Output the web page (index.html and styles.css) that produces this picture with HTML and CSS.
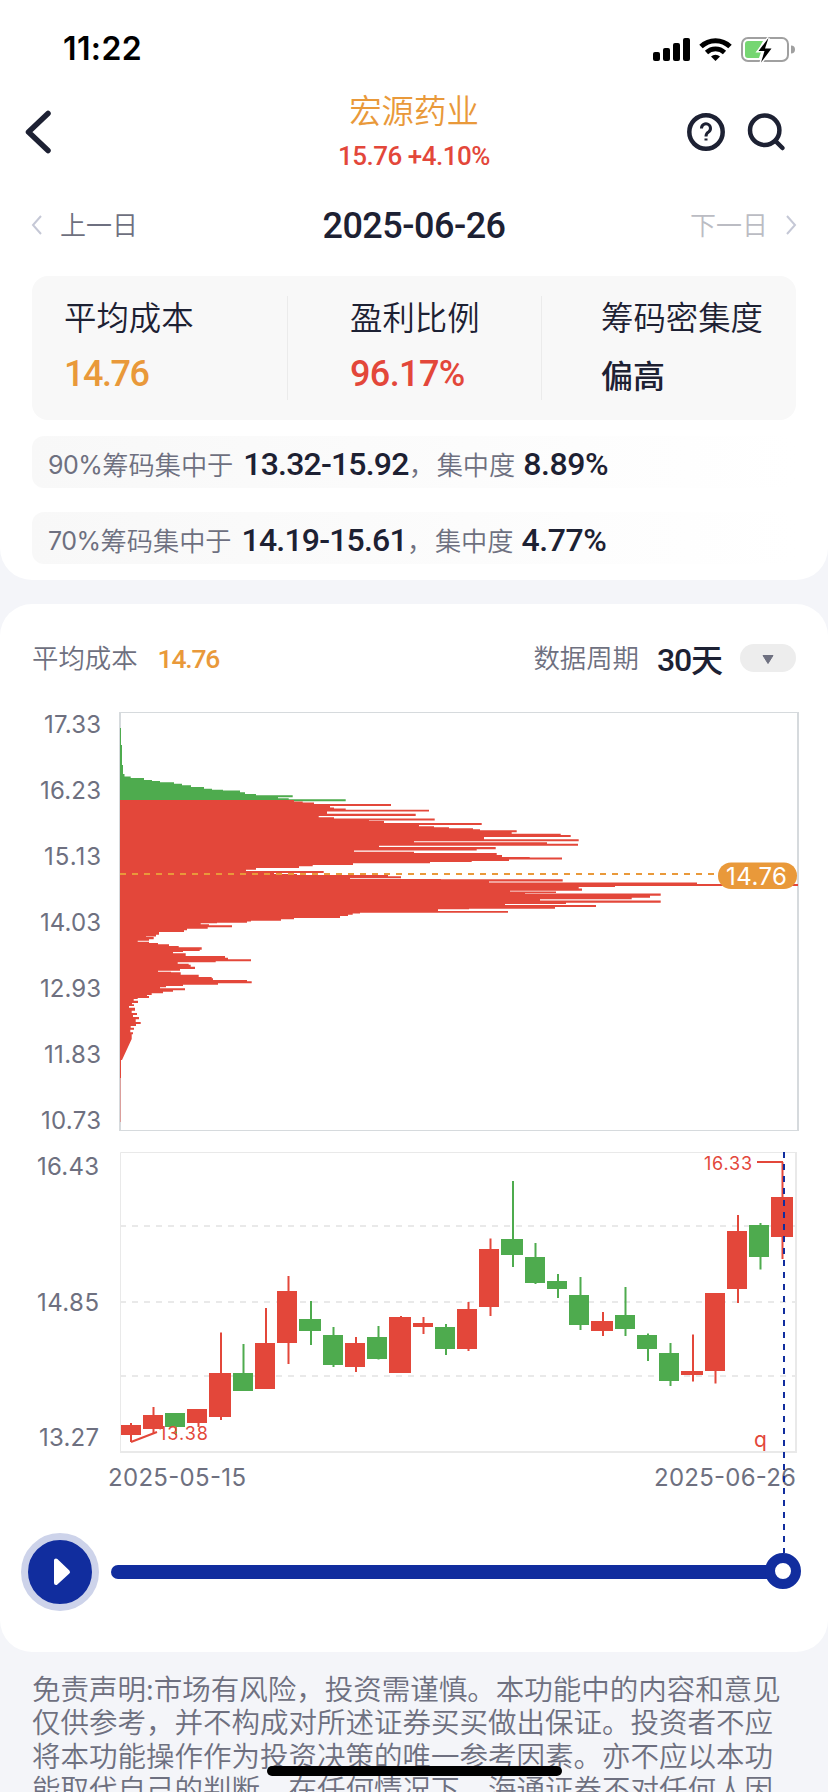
FILE: index.html
```
<!DOCTYPE html>
<html lang="zh-CN">
<head>
	<meta charset="utf-8">
	<title>筹码分布</title>
	<link rel="stylesheet" href="styles.css">
</head>
<body>
<div class="page">

	<div class="card top">
		<div class="status">
			<span class="time">11:22</span>
			<svg width="144" height="28" viewBox="652 36 144 28">
				<rect x="653" y="52" width="7" height="9" rx="2"/>
				<rect x="663" y="48" width="7" height="13" rx="2"/>
				<rect x="673" y="43" width="7" height="18" rx="2"/>
				<rect x="683" y="38" width="7" height="23" rx="2"/>
				<path d="M701 46.5a21 21 0 0 1 29 0" fill="none" stroke="#000" stroke-width="5"/>
				<path d="M706.5 52.5a13 13 0 0 1 18 0" fill="none" stroke="#000" stroke-width="4.6"/>
				<path d="M711 56.5a6.5 6.5 0 0 1 9 0l-4.500 4.500z"/>
				<rect x="742" y="38" width="46" height="23" rx="6" fill="none" stroke="#a0a0a0" stroke-width="2"/>
				<path d="M791 45.500a4 4 0 0 1 0 8z" fill="#a0a0a0"/>
				<path d="M748 41h15l-6 11h4l-2 6h-11a3 3 0 0 1-3-3v-11a3 3 0 0 1 3-3z" fill="#76d672"/>
				<path d="M768.500 38l-10 13h6l-3.500 11.500 10.500-14h-6.500z" stroke="#fff" stroke-width="3" paint-order="stroke"/>
			</svg>
		</div>

		<div class="nav">
			<svg class="back" width="30" height="46" viewBox="24 109 30 46"><path d="M48 113.500L28.500 132 48 150.500"/></svg>
			<div class="stock">
				<div class="name">宏源药业</div>
				<div class="price">15.76 +4.10%</div>
			</div>
			<svg class="tools" width="100" height="42" viewBox="686 111 100 42">
				<circle cx="706" cy="132" r="16.700"/>
				<path class="thin" d="M701.500 128.500a4.500 4.500 0 1 1 7 3.500q-2.500 1.500-2.500 4.500M706 138.500v2"/>
				<circle cx="764.700" cy="130.300" r="14.700"/>
				<path d="M775.500 141l7 7"/>
			</svg>
		</div>

		<div class="days">
			<div class="day prev"><svg width="12" height="22"><path d="M10 2L2 11l8 9"/></svg>上一日</div>
			<div class="date">2025-06-26</div>
			<div class="day next">下一日<svg width="12" height="22"><path d="M2 2l8 9-8 9"/></svg></div>
		</div>

		<div class="stats">
			<div class="stat"><div class="label">平均成本</div><div class="value orange">14.76</div></div>
			<div class="stat"><div class="label">盈利比例</div><div class="value red">96.17%</div></div>
			<div class="stat"><div class="label">筹码密集度</div><div class="value cn">偏高</div></div>
		</div>

		<div class="range"><i>90%</i><span>筹码集中于</span><b>13.32-15.92</b><span class="sep">，</span><span>集中度</span><b class="last">8.89%</b></div>
		<div class="range"><i>70%</i><span>筹码集中于</span><b>14.19-15.61</b><span class="sep">，</span><span>集中度</span><b class="last">4.77%</b></div>
	</div>

	<div class="card main">
		<div class="bar">
			<span class="cn">平均成本</span><span class="avg">14.76</span>
			<span class="cn period">数据周期</span><span class="num">30</span><span class="tian">天</span>
			<span class="drop"><svg width="14" height="12"><path d="M2 1.500h10L7 9.500z"/></svg></span>
		</div>

		<!-- chip distribution -->
		<svg class="chart" width="828" height="444" viewBox="0 700 828 444">
			<path class="frame" d="M121 712.500H797.500V1130.500H120.500"/>
			<path d="M798 712V1131M120 712V1131" stroke="#d6dadd" stroke-width="2"/>
			<path class="green" d="M120 728H121V745H122V765H123V774H124.500V776.500H130.700V778H144V780H152V781H160V782.300H174V783.700H182V785.300H191V787H204V788.700H212V789.700H223V790.400H240V792.300H245V794H256V795.300H292.700V797.300H278V798.300H288.700V799.300H345.700V801.300H120z"/>
			<path class="red" d="M120 800H294V801.500H302.700V802.500H314V804H391V806H330V807.500H334V808.500H345.700V809.700H429V811.500H327V813.800H415.700V816H318.700V817.300H334V818.500H434.700V820.400H369V821H384V823H481.700V825H419V826.300H434V827.300H449V828.300H473V829.300H480V830.300H516.700V832.300H511.700V833.700H560.700V835H570.700V837H484V839.300H578.700V841.300H414V842.300H547V843.700H578V845.700H379V847H495.700V849.300H476.700V850.500H354V851.700H414V853H496.700V855H502V857H529.700V857.600H562V859.500H509V861H471.700V862H430V863.300H353V865H312.700V866.300H299V868H256V869.700H246V871H323.700V873H274V874H297V875H388V876.300H401V878.200H350V879H441V879.300H562.700V881.500H489V882.600H697V884H798V886H615V887H578.700V888.500H582V890.700H510V891.500H556V893H525V893.500H660.700V895.700H650V897.700H631.700V899.300H540V900.500H660.700V902.700H566V904H505V905H596V907H555V908.700H469V909.200H438V911H508V912.700H360V913.500H352.700V914.700H348V916H340V918H294V919.300H281V920.700H251V921.500H247V922.700H217V923.300H200.700V924.300H209V925.300H232V927.300H207.700V928.700H187V930.300H184V932H159V934.700H156V936.500H146V937H153.700V939.300H149V940.700H137.700V941.700H149V943H158V944.300H169V946H178.700V947.300H201.700V949.700H199.700V951H183V952H173V953.300H185.700V956H225V957.700H228V959.300H251V961.300H215.700V962.300H177.700V963.700H188.700V964.700H190.700V966.700H195V969H180V970.700H158V971.700H171V972.300H180.700V974.700H198.700V977H211.700V978.300H213V980H247V981.300H251.700V983.300H218V984.700H183V986H166V987.300H160V988.300H185V990.300H173V991.700H163V993.300H151.700V995H147V996H149V998H137.700V999H133.700V1000.700H138V1003H132V1004.300H134V1006H129V1007.700H135V1010.700H131.700V1013H137V1015H133V1017H139V1019.300H135.700V1022H140.700V1024H136V1026H130.700V1027.700H134V1029.700H130.300V1032.300H133V1034.300H131.700V1039L128 1047 122 1060H121V1122H120z"/>
			<path d="M120 1078V1130" stroke="#d6dadd" stroke-width="2" opacity=".6"/>
			<path d="M120 874H718" stroke="#e9993a" stroke-width="2" stroke-dasharray="6 6"/>
			<rect x="718" y="862.500" width="79" height="26.500" rx="13" fill="#e9993a"/>
			<text x="726" y="885" class="tip" textLength="61">14.76</text>
			<g class="axis">
				<text x="44" y="733" textLength="57">17.33</text>
				<text x="40" y="799" textLength="61">16.23</text>
				<text x="44" y="865" textLength="57">15.13</text>
				<text x="40" y="931" textLength="61">14.03</text>
				<text x="40" y="997" textLength="61">12.93</text>
				<text x="44" y="1063" textLength="57">11.83</text>
				<text x="41" y="1129" textLength="60">10.73</text>
			</g>
		</svg>

		<!-- daily candles -->
		<svg class="chart" width="828" height="409" viewBox="0 1144 828 409">
			<path class="grid" d="M120.500 1452V1152.500H796"/>
			<path class="grid bold" d="M796 1152V1452H120"/>
			<path class="grid bold" stroke-dasharray="6 6" d="M120 1226H796M120 1302H796M120 1376H796"/>
			<g class="axis">
				<text x="37" y="1175" textLength="62">16.43</text>
				<text x="37" y="1311" textLength="62">14.85</text>
				<text x="39" y="1446" textLength="60">13.27</text>
				<text x="108" y="1486" textLength="138">2025-05-15</text>
				<text x="654" y="1486" textLength="142">2025-06-26</text>
			</g>
			<path class="wick up" d="M131 1423V1442M153.500 1407V1433M198.500 1415V1427M221 1332.500V1420M266 1308V1380M288.500 1276V1364M356 1337V1372M401 1316V1330M423.500 1317V1334M468.500 1302V1351M490.500 1238.500V1316M603 1312V1336M693 1334.500V1381.500M715.500 1300V1383.500M738 1215V1303M782.500 1162V1259"/>
			<path class="wick down" d="M176 1418V1435M243.500 1344V1385M311 1301V1345M333.500 1327V1367M378.500 1326V1359.500M446 1324V1355M513 1181V1267M535.500 1243V1284M558 1274V1298M580.500 1277V1330M625.500 1287V1336M648 1333.500V1361M670.500 1343V1386M760.500 1223V1269.500"/>
			<path class="red" d="M121 1425h20v10h-20zM143 1415h20v14h-20zM187 1409h20v14h-20zM209 1373h22v44h-22zM255 1343h20v46h-20zM277 1291h20v52h-20zM345 1343h20v24h-20zM389 1317h22v56h-22zM413 1323h20v4h-20zM457 1309h20v40h-20zM479 1249h20v58h-20zM591 1321h22v10h-22zM681 1371h22v4h-22zM705 1293h20v78h-20zM727 1231h20v58h-20zM771 1197h22v40h-22z"/>
			<path class="green" d="M165 1413h20v14h-20zM233 1373h20v18h-20zM299 1319h22v12h-22zM323 1335h20v30h-20zM367 1337h20v22h-20zM435 1327h20v22h-20zM501 1239h22v16h-22zM525 1257h20v26h-20zM547 1281h20v8h-20zM569 1295h20v30h-20zM615 1315h20v14h-20zM637 1335h20v14h-20zM659 1353h20v28h-20zM749 1225h20v32h-20z"/>
			<path class="wick up" d="M131 1442L157 1432M757 1162H783"/>
			<g class="mark">
				<text x="159" y="1440" textLength="49">13.38</text>
				<text x="704" y="1170" textLength="48">16.33</text>
				<text x="754" y="1447" class="q">q</text>
			</g>
			<path d="M784 1152V1553" stroke="#112d9e" stroke-width="2" stroke-dasharray="6 6"/>
		</svg>

		<div class="player">
			<div class="play"><svg width="20" height="32"><path d="M4 4.500v22.500L16 16z"/></svg></div>
			<div class="track"><div class="thumb"></div></div>
		</div>
	</div>

	<div class="notice">
		免责声明:市场有风险，投资需谨慎。本功能中的内容和意见<br>
		仅供参考，并不构成对所述证券买买做出保证。投资者不应<br>
		将本功能操作作为投资决策的唯一参考因素。亦不应以本功<br>
		能取代自己的判断。在任何情况下，海通证券不对任何人因
	</div>
	<div class="home"></div>
</div>
</body>
</html>
```
FILE: styles.css
```
* {
	box-sizing: border-box;
}

body {
	margin: 0;
	background: #f4f5f9;
	color: #1d2133;
	font-family: "Liberation Sans", "Noto Sans CJK SC", sans-serif;
}

.page {
	position: relative;
	width: 828px;
	height: 1792px;
	overflow: hidden;
}

svg {
	display: block;
}

.card {
	background: #fff;
}

.top {
	height: 580px;
	border-radius: 0 0 32px 32px;
}

.status {
	display: flex;
	justify-content: space-between;
	align-items: center;
	height: 92px;
	padding: 8px 32px 0 63px;
	color: #000;
}

.time {
	font: 600 32px/36px Inter, sans-serif;
	letter-spacing: 0.4px;
	margin-top: -2px;
}

.nav {
	display: flex;
	align-items: center;
	justify-content: space-between;
	height: 80px;
	padding: 0 42px 0 24px;
}

.nav svg {
	fill: none;
	stroke: #1d2133;
	stroke-width: 4.5;
	stroke-linecap: round;
	stroke-linejoin: round;
}

.nav svg.back {
	stroke-width: 5.5;
	margin-right: 88px;
}

.nav .thin {
	stroke-width: 3;
	stroke-linecap: butt;
}

.stock {
	text-align: center;
}

.name {
	font-family: "Noto Sans CJK SC", sans-serif;
	font-size: 32.4px;
	line-height: 44px;
	font-weight: 350;
	color: #e9993a;
}

.price {
	font: 500 26px/44px Roboto, sans-serif;
	letter-spacing: -0.5px;
	color: #e3473a;
	white-space: nowrap;
	margin-top: 3px;
}

.days {
	display: grid;
	grid-template-columns: 1fr auto 1fr;
	align-items: center;
	height: 104px;
	padding: 3px 31px 0;
}

.day {
	display: flex;
	align-items: center;
	gap: 17px;
	margin-top: -5px;
	font-size: 26px;
	font-family: "Noto Sans CJK SC", sans-serif;
	font-weight: 350;
	color: #6e7080;
}

.day svg {
	fill: none;
	stroke: #c5c8d6;
	stroke-width: 2;
	margin-top: 3px;
}

.next {
	justify-content: flex-end;
	color: #bbbcc3;
}

.date {
	font: 500 36px Roboto, sans-serif;
	letter-spacing: -0.5px;
}

.stats {
	display: flex;
	margin: 0 32px 16px;
	height: 144px;
	padding: 20px 0;
	border-radius: 16px;
	background: #f8f8f8;
}

.stat {
	width: 254px;
	padding-left: 62px;
	border-right: 1px solid #ebebeb;
	white-space: nowrap;
}

.stat:first-child {
	width: 256px;
	padding-left: 32px;
}

.stat:last-child {
	border: 0;
	padding-left: 59px;
}

.label {
	font: 350 32.4px/46px "Noto Sans CJK SC", sans-serif;
	margin-top: -3px;
}

.value {
	font: 500 36px/40px Roboto, sans-serif;
	letter-spacing: -0.6px;
	margin-top: 15px;
}

.value.orange {
	letter-spacing: -1.5px;
}

.value.cn {
	font: 500 32px/46px "Noto Sans CJK SC", sans-serif;
	letter-spacing: 0;
	margin-top: 12px;
}

.orange {
	color: #e9993a;
}

.red {
	color: #e3473a;
	fill: #e3473a;
}

.green {
	fill: #4eab4e;
}

.range {
	display: flex;
	align-items: center;
	height: 52px;
	margin: 0 32px 24px;
	padding: 6px 16px 0;
	border-radius: 12px;
	background: linear-gradient(90deg, #f8f8f8, #fff);
	font: 350 26.2px "Noto Sans CJK SC", sans-serif;
	color: #6e7080;
	white-space: nowrap;
}

.range span {
	margin-top: -3px;
}

.range i {
	font: 400 25px Inter, sans-serif;
	letter-spacing: -0.5px;
}

.range b {
	font: 500 32px Roboto, sans-serif;
	letter-spacing: -0.8px;
	color: #1d2133;
	margin-left: 10px;
	margin-top: -3px;
}

.range .sep {
	width: 28px;
}

.range .last {
	letter-spacing: -0.4px;
	margin-left: 8px;
}

.main {
	height: 1048px;
	margin-top: 24px;
	border-radius: 32px;
}

.bar {
	display: flex;
	align-items: center;
	height: 96px;
	padding: 12px 32px 0;
	font: 350 26.4px "Noto Sans CJK SC", sans-serif;
	color: #6e7080;
}

.bar .cn {
	margin-top: -3px;
}

.avg {
	font: 500 26.5px Roboto, sans-serif;
	letter-spacing: -1.2px;
	color: #e9993a;
	margin-left: 20px;
	margin-top: 1px;
}

.period {
	margin-left: auto;
}

.num {
	font: 500 32px Roboto, sans-serif;
	letter-spacing: -1.2px;
	color: #1d2133;
	margin-left: 18px;
	margin-top: 3px;
}

.tian {
	font-size: 32px;
	font-weight: 500;
	color: #1d2133;
}

.drop {
	display: flex;
	align-items: center;
	justify-content: center;
	width: 56px;
	height: 28px;
	margin-left: 17px;
	border-radius: 14px;
	background: #ededed;
}

.drop svg {
	fill: #6e7080;
	stroke: #6e7080;
	stroke-linejoin: round;
	margin-top: 3px;
}

.frame {
	fill: none;
	stroke: #d6dadd;
}

.grid {
	fill: none;
	stroke: #e9e9e9;
}

.bold {
	stroke-width: 2;
}

.axis text {
	font: 400 24px Inter, sans-serif;
	fill: #6e7080;
}

.tip {
	font: 400 24px Inter, sans-serif;
	fill: #fff;
}

.mark text {
	font: 400 18px Inter, sans-serif;
	fill: #e3473a;
}

.mark .q {
	font-size: 21px;
}

.wick {
	fill: none;
	stroke-width: 2;
}

.up {
	stroke: #e3473a;
}

.down {
	stroke: #4eab4e;
}

.player {
	display: flex;
	align-items: center;
	height: 78px;
	margin-top: -20px;
	padding: 0 28px 0 21px;
}

.play {
	display: flex;
	align-items: center;
	justify-content: center;
	width: 78px;
	height: 78px;
	border: 7px solid #cdd3ea;
	border-radius: 50%;
	background: #112d9e;
}

.play svg {
	fill: #fff;
	stroke: #fff;
	stroke-width: 4;
	stroke-linejoin: round;
	margin-left: 4px;
}

.track {
	display: flex;
	flex: 1;
	align-items: center;
	justify-content: flex-end;
	height: 14px;
	margin-left: 12px;
	border-radius: 7px;
	background: #112d9e;
}

.thumb {
	width: 36px;
	height: 36px;
	margin: 0 -1px 2px 0;
	border: 10px solid #112d9e;
	border-radius: 50%;
	background: #fff;
	flex: none;
}

.notice {
	padding: 19px 32px 0;
	font: 350 28.5px/33.4px "Noto Sans CJK SC", sans-serif;
	color: #6e7080;
	white-space: nowrap;
}

.home {
	position: absolute;
	left: 267px;
	top: 1766px;
	width: 295px;
	height: 10px;
	border-radius: 5px;
	background: #000;
}
```
